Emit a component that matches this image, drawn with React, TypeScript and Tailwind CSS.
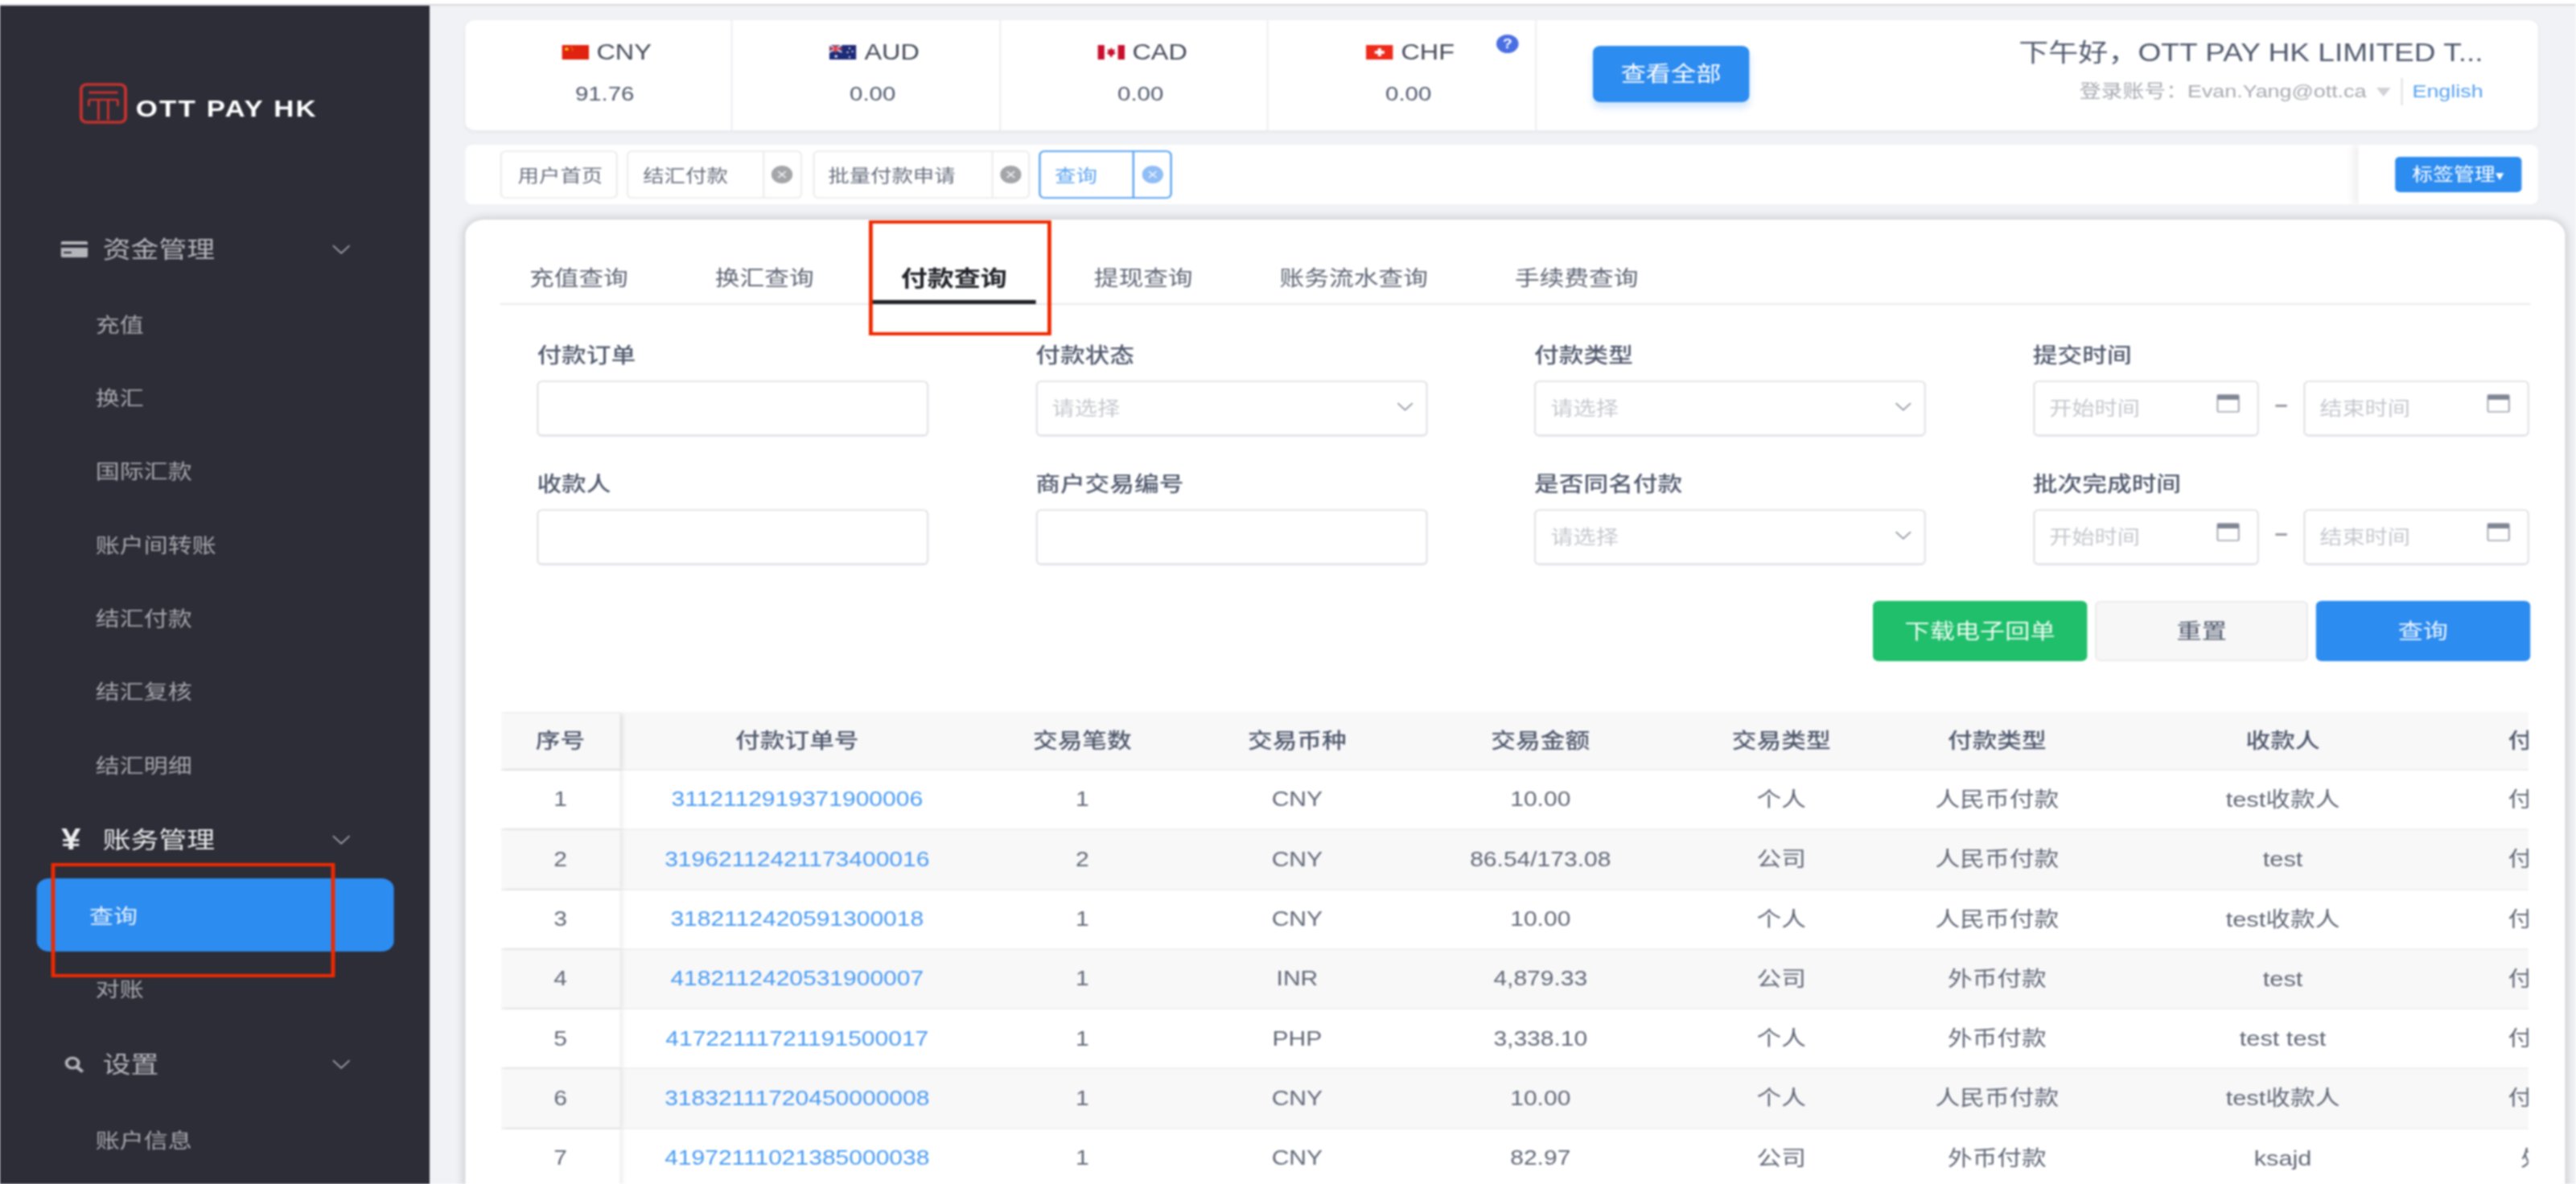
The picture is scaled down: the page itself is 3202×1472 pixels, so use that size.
import React from "react";

const colW = ["w-[122.5px]","w-[368px]","w-[223px]","w-[222px]","w-[282px]","w-[217px]","w-[230px]","w-[362px]","w-[207px]"];

const rows = [
  ["1","3112112919371900006","1","CNY","10.00","个人","人民币付款","test收款人","付款成功"],
  ["2","31962112421173400016","2","CNY","86.54/173.08","公司","人民币付款","test","付款成功"],
  ["3","3182112420591300018","1","CNY","10.00","个人","人民币付款","test收款人","付款成功"],
  ["4","4182112420531900007","1","INR","4,879.33","公司","外币付款","test","付款成功"],
  ["5","41722111721191500017","1","PHP","3,338.10","个人","外币付款","test test","付款成功"],
  ["6","31832111720450000008","1","CNY","10.00","个人","人民币付款","test收款人","付款成功"],
  ["7","41972111021385000038","1","CNY","82.97","公司","外币付款","ksajd","处理中"],
];
const headers = ["序号","付款订单号","交易笔数","交易币种","交易金额","交易类型","付款类型","收款人","付款状态"];

function Chevron({ className }: { className: string }) {
  return (
    <svg viewBox="0 0 20 12" className={className} fill="none" stroke="currentColor" strokeWidth="1.6">
      <polyline points="1,1 10,11 19,1" />
    </svg>
  );
}

function Logo() {
  return (
    <svg viewBox="0 0 50 51" className="w-[50px] h-[51px]" fill="none" stroke="#c2322f">
      <rect x="2" y="2" width="46" height="47" rx="6" strokeWidth="3.4" />
      <path d="M10 12H40" strokeWidth="3" />
      <path d="M10 21H40M10 21V29M40 21V29M20 21V46M30 21V46" strokeWidth="2.4" />
    </svg>
  );
}

function FlagCN() {
  return (
    <svg viewBox="0 0 28 18" className="w-[28px] h-[18px]">
      <rect width="28" height="18" fill="#e0230f" />
      <circle cx="5" cy="5" r="2" fill="#f5c518" />
      <circle cx="10" cy="3" r="0.7" fill="#f5c518" />
      <circle cx="11" cy="6" r="0.7" fill="#f5c518" />
    </svg>
  );
}
function FlagAU() {
  return (
    <svg viewBox="0 0 28 18" className="w-[28px] h-[18px]">
      <rect width="28" height="18" fill="#1d2b78" />
      <rect width="13" height="9" fill="#3b3f86" />
      <path d="M0 0L13 9M13 0L0 9" stroke="#e9e9f2" strokeWidth="1.6" />
      <path d="M6.5 0V9M0 4.5H13" stroke="#e33" strokeWidth="2" />
      <circle cx="7" cy="14" r="1.5" fill="#fff" />
      <circle cx="21" cy="4" r="1" fill="#fff" />
      <circle cx="24" cy="8" r="1" fill="#fff" />
      <circle cx="19" cy="9" r="1" fill="#fff" />
      <circle cx="21" cy="15" r="1" fill="#fff" />
    </svg>
  );
}
function FlagCA() {
  return (
    <svg viewBox="0 0 28 18" className="w-[28px] h-[18px]">
      <rect width="28" height="18" fill="#fff" />
      <rect width="7" height="18" fill="#c8102e" />
      <rect x="21" width="7" height="18" fill="#c8102e" />
      <path d="M14 3L15.5 6L18 5L17 9L19 10L15 13V15H13V13L9 10L11 9L10 5L12.5 6Z" fill="#c8102e" />
    </svg>
  );
}
function FlagCH() {
  return (
    <svg viewBox="0 0 28 18" className="w-[28px] h-[18px]">
      <rect width="28" height="18" fill="#ee2a1b" />
      <path d="M14 4V14M9 9H19" stroke="#fff" strokeWidth="3.4" />
    </svg>
  );
}

function Currency({ flag, code, value, last }: { flag: React.ReactNode; code: string; value: string; last?: boolean }) {
  return (
    <div className="relative w-[277.5px] h-full border-r-2 border-[#f0f1f3] flex flex-col items-center pt-[22px] pl-[18px]">
      <div className="h-[36px] flex items-center gap-[8px] text-[27px] text-[#464c5b]">
        {flag}
        <span>{code}</span>
      </div>
      <div className="mt-[16px] h-[36px] leading-[36px] text-[24.5px] text-[#515a6e] pr-[4px]">{value}</div>
      {last && (
        <div className="absolute left-[236px] top-[18px] w-[23px] h-[23px] rounded-full bg-[#4a6fe3] text-white text-[16px] font-bold leading-[23px] text-center">?</div>
      )}
    </div>
  );
}

function XCircle({ active }: { active?: boolean }) {
  return (
    <svg viewBox="0 0 22 22" className="w-[22px] h-[22px]">
      <circle cx="11" cy="11" r="11" fill={active ? "#8fbdf6" : "#a3a5a8"} />
      <path d="M7 7L15 15M15 7L7 15" stroke="#fff" strokeOpacity="0.85" strokeWidth="1.5" />
    </svg>
  );
}

function Tag({ text, w, left, pad, active }: { text: string; w: string; left?: string; pad: string; active?: boolean }) {
  const border = active ? "border-[#5aa3f2]" : "border-[#eeeeef]";
  return (
    <div className={`${w} h-[60px] flex border-2 ${border} rounded-[6px] bg-white text-[22px] leading-[59px] ${active ? "text-[#5aa3f2]" : "text-[#6a7180]"}`}>
      <div className={`${left ?? "flex-1"} ${pad} shrink-0`}>{text}</div>
      {left && (
        <div className={`flex-1 flex items-center justify-center border-l-2 ${border}`}>
          <XCircle active={active} />
        </div>
      )}
    </div>
  );
}

function Calendar() {
  return (
    <svg viewBox="0 0 24 24" className="w-[24px] h-[24px] shrink-0 -mt-[14px]">
      <rect x="1" y="2" width="22" height="21" rx="1" fill="none" stroke="#9ea3ae" strokeWidth="1.6" />
      <rect x="1" y="2" width="22" height="6" fill="#7f8593" />
    </svg>
  );
}

function Input({ placeholder, kind }: { placeholder?: string; kind?: "select" | "date" }) {
  return (
    <div className={`h-[70px] w-full flex items-center justify-between border-2 border-[#e4e5e9] border-b-[3px] rounded-[6px] bg-white pl-[15px] ${kind === "select" ? "pr-[13px]" : "pr-[18px]"} text-[23.5px] text-[#c5c8ce]`}>
      <span className="pt-[3px]">{placeholder}</span>
      {kind === "select" && <Chevron className="w-[17px] h-[11px] text-[#808695] -mt-[4px]" />}
      {kind === "date" && <Calendar />}
    </div>
  );
}

function Field({ label, children }: { label: string; children: React.ReactNode }) {
  return (
    <div className="h-[160px]">
      <div className="h-[40px] leading-[43px] mb-[12px] text-[25.6px] font-medium text-[#515a6e]">{label}</div>
      {children}
    </div>
  );
}

function DateRange() {
  return (
    <div className="flex items-center">
      <div className="w-[234px]"><Input placeholder="开始时间" kind="date" /></div>
      <div className="w-[46px] flex justify-center -mt-[8px]"><div className="w-[12px] h-[3px] bg-[#9a9ca3]" /></div>
      <div className="w-[234px]"><Input placeholder="结束时间" kind="date" /></div>
    </div>
  );
}

function MenuHead({ icon, text, bright, cls }: { icon: React.ReactNode; text: string; bright?: boolean; cls?: string }) {
  return (
    <div className={`${cls ?? ""} h-[92px] flex items-center pl-[62.5px] pr-[82px] text-[29px] ${bright ? "text-[#e8e8ea]" : "text-[#b4b5ba]"}`}>
      <div className="w-[44px] shrink-0 flex items-center">{icon}</div>
      <span className="pt-[3px]">{text}</span>
      <Chevron className="ml-auto w-[19px] h-[12px] text-[#a6a7ac]" />
    </div>
  );
}

function MenuItem({ text }: { text: string }) {
  return <div className="h-[91.4px] leading-[94px] pl-[99px] text-[25px] text-[#a6a7ac]">{text}</div>;
}

export default function App() {
  return (
    <div className="relative w-[2668.34px] h-[1472px] overflow-hidden origin-top-left scale-x-[1.2] blur-[0.8px] bg-[#f0f2f5] font-['Liberation_Sans','Noto_Sans_CJK_SC',sans-serif]">
      <div className="h-[7px] bg-white border-b-2 border-[#d6d7da]" />
      <div className="flex h-[1465px]">
        <aside className="w-[445px] shrink-0 bg-[#2c2d37]">
          <div className="h-[257px] pl-[81.67px] pt-[96px] flex items-start gap-[9px]">
            <Logo />
            <span className="mt-[14px] text-[29px] font-bold text-white tracking-[1.8px] leading-[36px] whitespace-nowrap">OTT PAY HK</span>
          </div>
          <MenuHead
            text="资金管理"
            icon={
              <svg viewBox="0 0 28 20" className="w-[28px] h-[20px]">
                <rect width="28" height="20" rx="2" fill="#b4b5ba" />
                <rect y="4" width="28" height="4" fill="#2c2d37" />
                <rect x="3" y="13" width="8" height="2" fill="#2c2d37" />
              </svg>
            }
          />
          <div className="h-[0.5px]" />
          {["充值","换汇","国际汇款","账户间转账","结汇付款","结汇复核","结汇明细"].map((t) => <MenuItem key={t} text={t} />)}
          <MenuHead
            cls="mt-[2px]"
            bright
            text="账务管理"
            icon={<span className="text-[36px] font-bold leading-[36px] text-[#eeeeef] ml-[1px]">¥</span>}
          />
          <div className="mt-[1.5px] mx-[37.5px] w-[370px] h-[91px] rounded-[13px] bg-[#2d8cf0] pl-[55px] leading-[94px] text-[25px] text-[#e6f1fd]">查询</div>
          <MenuItem text="对账" />
          <MenuHead
            cls="mt-[3px]"
            text="设置"
            icon={
              <svg viewBox="0 0 22 22" className="w-[22px] h-[21px] ml-[3px]" fill="none" stroke="#b4b5ba">
                <circle cx="9" cy="9" r="6.5" strokeWidth="3.4" />
                <path d="M13.5 14L20 20.5" strokeWidth="3.8" />
              </svg>
            }
          />
          <div className="h-[2px]" />
          <MenuItem text="账户信息" />
        </aside>

        <main className="flex-1 min-w-0 pl-[36.67px]">
          <div className="mt-[18px] w-[2147.5px] h-[137px] flex items-center rounded-[10px] bg-white shadow-[0_2px_6px_rgba(0,0,0,0.05)]">
            <Currency flag={<FlagCN />} code="CNY" value="91.76" />
            <Currency flag={<FlagAU />} code="AUD" value="0.00" />
            <Currency flag={<FlagCA />} code="CAD" value="0.00" />
            <Currency flag={<FlagCH />} code="CHF" value="0.00" last />
            <button className="ml-[58px] -mt-[3px] w-[162.5px] h-[70px] rounded-[8px] bg-[#2d8cf0] text-white text-[26px] shadow-[0_7px_8px_rgba(45,140,240,0.22)]">查看全部</button>
            <div className="ml-auto h-full pr-[57px] pt-[21px] flex flex-col items-end">
              <div className="h-[40px] leading-[40px] text-[30.9px] text-[#515a6e] whitespace-nowrap">下午好，OTT PAY HK LIMITED T...</div>
              <div className="mt-[12px] h-[32px] flex items-center text-[22.4px] text-[#a8abb2] whitespace-nowrap">
                <span>登录账号：Evan.Yang@ott.ca</span>
                <svg viewBox="0 0 16 12" className="ml-[10px] w-[16px] h-[11px]"><polygon points="0,0 16,0 8,12" fill="#d0d2d6" /></svg>
                <div className="ml-[10px] h-[34px] w-[1.5px] bg-[#e3e4e7]" />
                <span className="ml-[10px] text-[#5aa3f2]">English</span>
              </div>
            </div>
          </div>

          <div className="mt-[18px] w-[2147.5px] h-[74px] flex items-center rounded-[8px] bg-white pl-[36.67px] overflow-hidden">
            <Tag text="用户首页" w="w-[121.7px]" pad="pl-[16px]" />
            <div className="w-[9px]" />
            <Tag text="结汇付款" w="w-[181.7px]" left="w-[139px]" pad="pl-[15px]" />
            <div className="w-[11px]" />
            <Tag text="批量付款申请" w="w-[225.8px]" left="w-[183px]" pad="pl-[14px]" />
            <div className="w-[9px]" />
            <Tag text="查询" w="w-[137.5px]" left="w-[95px]" pad="pl-[14px]" active />
            <div className="ml-auto w-[186px] h-full bg-white shadow-[-6px_0_8px_rgba(0,0,0,0.06)] flex items-center pl-[37.5px]">
              <button className="w-[131px] h-[44px] rounded-[5px] bg-[#2d8cf0] text-white text-[21.5px] leading-[44px] whitespace-nowrap">标签管理<span className="text-[17px]">▾</span></button>
            </div>
          </div>

          <div className="mt-[19px] w-[2175px] h-[1300px] rounded-t-[20px] bg-white shadow-[0_0_12px_rgba(0,0,0,0.22)]">
            <div className="ml-[36.67px] w-[2102.5px] h-[106px] border-b-2 border-[#e8e9ec] flex items-end text-[25.6px] text-[#5f6675]">
              {["充值查询","换汇查询","付款查询","提现查询","账务流水查询","手续费查询"].map((t) =>
                t === "付款查询" ? (
                  <div key={t} className="mr-[30px] h-[53px] px-[30px] leading-[44px] text-[27.5px] font-bold text-[#22252b] border-b-[5px] border-[#1f2125] -mb-[1px]">{t}</div>
                ) : (
                  <div key={t} className="mr-[30px] h-[53px] px-[30px] leading-[45px]">{t}</div>
                )
              )}
            </div>

            <div className="mt-[42px] pl-[74.5px] grid grid-cols-[406px_406px_406px_516px] gap-x-[110.5px]">
              <Field label="付款订单"><Input /></Field>
              <Field label="付款状态"><Input placeholder="请选择" kind="select" /></Field>
              <Field label="付款类型"><Input placeholder="请选择" kind="select" /></Field>
              <Field label="提交时间"><DateRange /></Field>
              <Field label="收款人"><Input /></Field>
              <Field label="商户交易编号"><Input /></Field>
              <Field label="是否同名付款"><Input placeholder="请选择" kind="select" /></Field>
              <Field label="批次完成时间"><DateRange /></Field>
            </div>

            <div className="mt-[6px] pr-[36px] flex justify-end gap-[8px] text-[26px]">
              <button className="w-[222.5px] h-[75px] pt-[2px] rounded-[6px] bg-[#20bf6b] text-[#eafaf1]">下载电子回单</button>
              <button className="w-[221px] h-[75px] pt-[2px] rounded-[6px] bg-[#f7f7f7] border-2 border-[#ececee] text-[#515a6e]">重置</button>
              <button className="w-[221.5px] h-[75px] pt-[2px] rounded-[6px] bg-[#2d8cf0] text-[#eaf4fe]">查询</button>
            </div>

            <div className="mt-[63px] ml-[37.5px] w-[2100px] overflow-hidden">
              <div className="flex h-[73px] pt-[2px] bg-[#f8f8f9] border-b-2 border-[#eceef0] text-[25.6px] font-medium text-[#515a6e]">
                {headers.map((h, i) => (
                  <div key={h} className={`${colW[i]} shrink-0 flex items-center justify-center whitespace-nowrap ${i === 0 ? "bg-[#f8f8f9] shadow-[3px_0_5px_rgba(0,0,0,0.1)]" : ""}`}>{h}</div>
                ))}
              </div>
              {rows.map((r, ri) => (
                <div key={ri} className={`flex h-[74.3px] border-b-2 border-[#eff0f2] text-[#626978] ${ri % 2 === 1 ? "bg-[#f8f8f9]" : "bg-white"}`}>
                  {r.map((c, i) => (
                    <div
                      key={i}
                      className={`${colW[i]} shrink-0 flex items-center justify-center whitespace-nowrap ${i === 0 ? `shadow-[3px_0_5px_rgba(0,0,0,0.07)] ${ri % 2 === 1 ? "bg-[#f8f8f9]" : "bg-white"}` : ""} ${i === 1 ? "text-[#4a9bf2]" : ""} ${i >= 5 ? "text-[25.6px]" : "text-[25px]"}`}
                    >
                      {c}
                    </div>
                  ))}
                </div>
              ))}
            </div>
          </div>
        </main>
      </div>

      <div className="absolute left-[52.5px] top-[1073px] w-[294px] h-[142px] border-[4.5px] border-[#ee2a00]" />
      <div className="absolute left-[900px] top-[274px] w-[189px] h-[143px] border-[4.5px] border-[#ee2a00]" />
    </div>
  );
}
